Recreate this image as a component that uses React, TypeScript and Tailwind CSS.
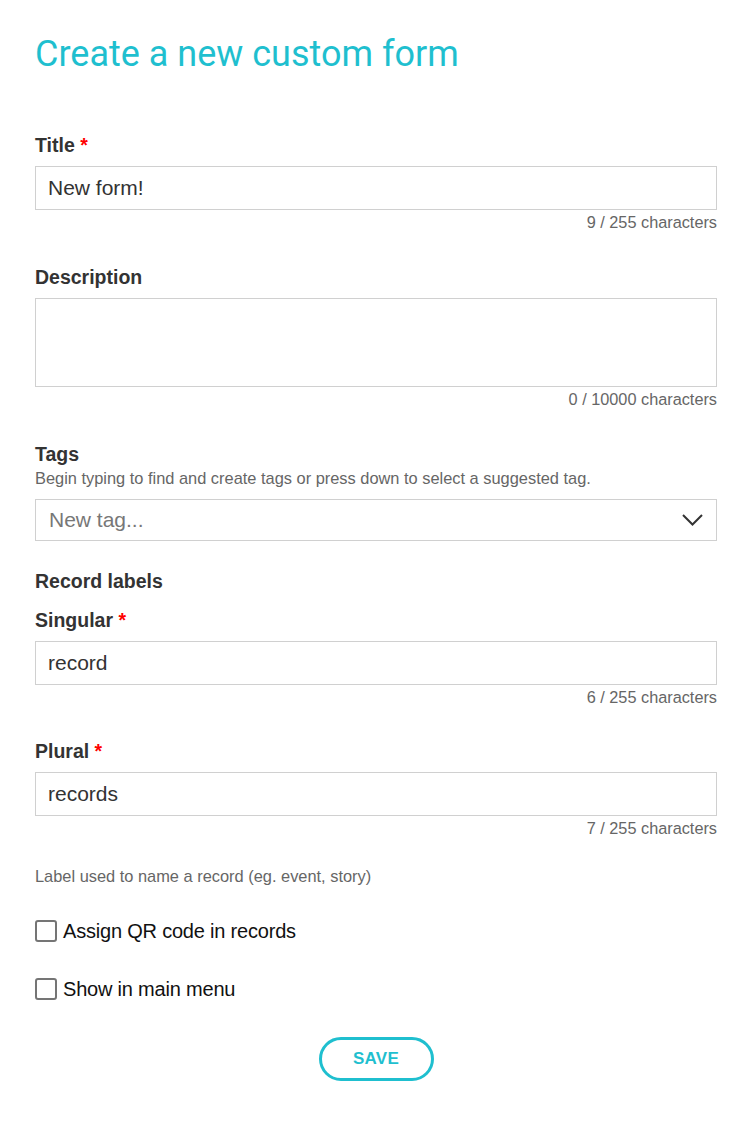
import React from "react";

const body = { fontFamily: '"Liberation Sans", Arial, sans-serif' };

function Label({ text, required }: { text: string; required?: boolean }) {
  return (
    <div className="text-[19.5px] leading-[22px] font-bold text-[#333333]">
      {text}
      {required && <span className="text-[#ff0000]"> *</span>}
    </div>
  );
}

function Counter({ text }: { text: string }) {
  return <div className="mt-[3px] text-right text-[16.3px] leading-[18px] text-[#666666]">{text}</div>;
}

function Input({ value }: { value: string }) {
  return (
    <div className="mt-[10px] flex h-[44px] items-center border border-[#d0d0d0] px-[12px] text-[21px] text-[#333333]">
      {value}
    </div>
  );
}

function Check({ label, className }: { label: string; className?: string }) {
  return (
    <div className={"flex h-[24px] items-center " + (className ?? "")}>
      <span className="box-border h-[22px] w-[22px] rounded-[3px] border-2 border-[#757575] bg-white" />
      <span className="ml-[6px] text-[20px] leading-[24px] tracking-[-0.2px] text-[#111111]">{label}</span>
    </div>
  );
}

export default function App() {
  return (
    <div className="min-h-[1125px] w-[745px] bg-white pl-[35px] pr-[28px] pt-[30px]" style={body}>
      <h1
        className="text-[36px] leading-[48px] font-normal text-[#1fbfcf]"
        style={{ fontFamily: 'Roboto, "Noto Sans", sans-serif' }}
      >
        Create a new custom form
      </h1>

      <div className="mt-[56px]">
        <Label text="Title" required />
        <Input value="New form!" />
        <Counter text="9 / 255 characters" />
      </div>

      <div className="mt-[35px]">
        <Label text="Description" />
        <div className="mt-[10px] h-[89px] border border-[#d0d0d0]" />
        <Counter text="0 / 10000 characters" />
      </div>

      <div className="mt-[35px]">
        <Label text="Tags" />
        <div className="mt-[4px] text-[16.4px] leading-[18px] text-[#666666]">
          Begin typing to find and create tags or press down to select a suggested tag.
        </div>
        <div className="mt-[12px] flex h-[42px] items-center justify-between border border-[#d0d0d0] pl-[13px] pr-[13px]">
          <span className="text-[21px] text-[#777777]">New tag...</span>
          <svg width="21" height="12" viewBox="0 0 21 12" fill="none">
            <path d="M1 1 L10.5 10.5 L20 1" stroke="#333333" strokeWidth="2" />
          </svg>
        </div>
      </div>

      <div className="mt-[29px]">
        <Label text="Record labels" />
      </div>

      <div className="mt-[17px]">
        <Label text="Singular" required />
        <Input value="record" />
        <Counter text="6 / 255 characters" />
      </div>

      <div className="mt-[34px]">
        <Label text="Plural" required />
        <Input value="records" />
        <Counter text="7 / 255 characters" />
      </div>

      <div className="mt-[30px] text-[16.4px] leading-[18px] text-[#666666]">
        Label used to name a record (eg. event, story)
      </div>

      <Check label="Assign QR code in records" className="mt-[34px]" />
      <Check label="Show in main menu" className="mt-[34px]" />

      <div className="mt-[36px] flex justify-center">
        <button className="flex h-[44px] w-[115px] items-center justify-center rounded-full border-[3px] border-[#1fbfcf] bg-white text-[17px] font-bold tracking-[0.3px] text-[#1fbfcf]">
          SAVE
        </button>
      </div>
    </div>
  );
}
